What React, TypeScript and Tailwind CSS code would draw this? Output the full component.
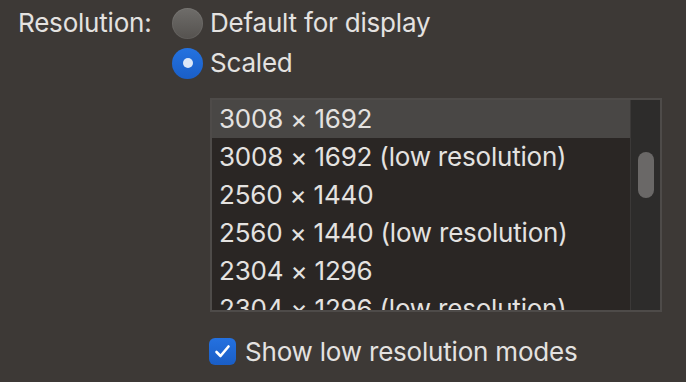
import React from 'react';

const modes = [
  '3008 × 1692',
  '3008 × 1692 (low resolution)',
  '2560 × 1440',
  '2560 × 1440 (low resolution)',
  '2304 × 1296',
  '2304 × 1296 (low resolution)',
];

export default function App() {
  return (
    <div className="w-[686px] h-[382px] bg-[#3d3936] text-[#e4e2e0] text-[26px] leading-none tracking-[-0.2px] overflow-hidden font-['Inter','Liberation_Sans',sans-serif]">
      <div className="flex pl-[18px] pt-[8px]">
        <div className="w-[154px] h-[30px] flex items-center">Resolution:</div>

        <div className="flex flex-col">
          {/* radios */}
          <div className="flex items-center h-[30px] gap-[7px]">
            <span className="w-[31px] h-[31px] rounded-full bg-gradient-to-b from-[#6f6d6a] to-[#55524f] shadow-[inset_0_0_0_1px_rgba(255,255,255,0.06)]" />
            <span>Default for display</span>
          </div>
          <div className="flex items-center h-[30px] gap-[7px] mt-[10px]">
            <span className="w-[31px] h-[31px] rounded-full bg-gradient-to-b from-[#2472e0] to-[#1a5fc8] flex items-center justify-center">
              <span className="w-[10px] h-[10px] rounded-full bg-[#dde8f8]" />
            </span>
            <span>Scaled</span>
          </div>

          {/* list */}
          <div className="ml-[38px] mt-[20px] w-[452px] h-[214px] border-2 border-[#4e4b49] bg-[#2a2624] flex overflow-hidden">
            <div className="w-[418px] h-[210px] overflow-hidden">
              {modes.map((m, i) => (
                <div
                  key={m}
                  className={`h-[38px] shrink-0 flex items-center pl-[7px] whitespace-nowrap ${i === 0 ? 'bg-[#494745]' : ''}`}
                >
                  {m}
                </div>
              ))}
            </div>
            <div className="w-px bg-[#3b3938]" />
            <div className="flex-1 bg-[#2d2c2b] flex justify-center pt-[52px]">
              <div className="w-[16px] h-[46px] rounded-full bg-[#6a6867]" />
            </div>
          </div>

          {/* checkbox */}
          <div className="ml-[37px] mt-[26px] flex items-center gap-[9px]">
            <span className="w-[27px] h-[27px] rounded-[6px] bg-gradient-to-b from-[#2471e0] to-[#1a5ec6] flex items-center justify-center">
              <svg width="17" height="15" viewBox="0 0 17 15" fill="none">
                <path d="M2.5 8 L6.5 12 L14.5 2.5" stroke="#ffffff" strokeWidth="2.6" strokeLinecap="round" strokeLinejoin="round" />
              </svg>
            </span>
            <span>Show low resolution modes</span>
          </div>
        </div>
      </div>
    </div>
  );
}
